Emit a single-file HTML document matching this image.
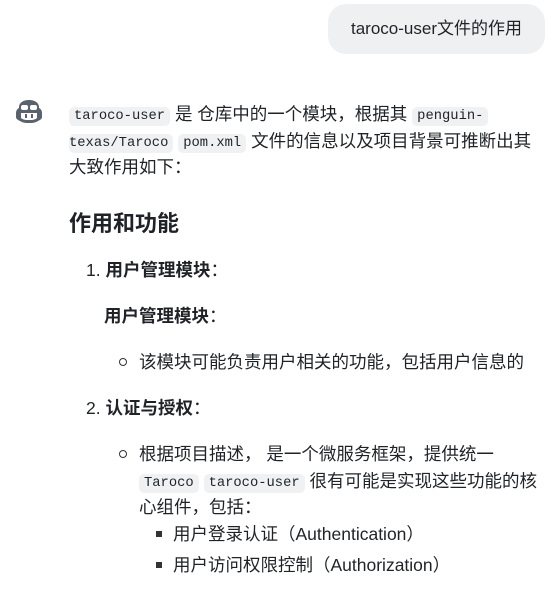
<!DOCTYPE html>
<html><head><meta charset="utf-8"><style>
body{margin:0;width:557px;height:591px;background:#fff;font-family:"Liberation Sans","Noto Sans CJK SC",sans-serif;color:#1f2328;font-size:17.5px;position:relative;overflow:hidden}
.a{position:absolute;white-space:nowrap;line-height:20px}
code{font-family:"Liberation Mono","DejaVu Sans Mono",monospace;font-size:13.8px;background:#eff1f3;border-radius:5px;padding:2px 5px;vertical-align:1px}
b{font-weight:bold}
.bub{position:absolute;left:328px;top:4px;width:217px;height:50px;border-radius:18px;background:#eff0f2;text-align:center;line-height:50px;font-size:17px}
.circ{position:absolute;width:6px;height:6px;border:1.3px solid #333;border-radius:50%}
.sq{position:absolute;width:6px;height:6px;background:#333}
</style></head><body>
<div class="bub">taroco-user文件的作用</div>
<svg style="position:absolute;left:13px;top:97px" width="32" height="28" viewBox="0 0 32 28">
<path d="M16 3c-6 0-10 3-10 7v1c-2 1-3 3-3 5v4c0 2 2 3 4 4 3 2 6 2 9 2s6 0 9-2c2-1 4-2 4-4v-4c0-2-1-4-3-5v-1c0-4-4-7-10-7z" fill="#59636e"/>
<rect x="8" y="8" width="7" height="5" rx="2" fill="#fff"/><rect x="17" y="8" width="7" height="5" rx="2" fill="#fff"/>
<path d="M8 16h16v5c-2 2-5 2-8 2s-6 0-8-2z" fill="#fff"/>
<rect x="12" y="17" width="2" height="4" fill="#59636e"/><rect x="18" y="17" width="2" height="4" fill="#59636e"/>
</svg>
<div class="a" style="left:69px;top:104px"><code>taroco-user</code> 是 仓库中的一个模块，根据其 <code>penguin-</code></div>
<div class="a" style="left:69px;top:131px"><code style="padding-left:0">texas/Taroco</code> <code>pom.xml</code> 文件的信息以及项目背景可推断出其</div>
<div class="a" style="left:69px;top:157px">大致作用如下：</div>
<div class="a" style="left:69px;top:212px;font-size:22px;font-weight:bold;line-height:24px">作用和功能</div>
<div class="a" style="left:86px;top:260px">1. <b>用户管理模块</b>：</div>
<div class="a" style="left:104px;top:306px"><b>用户管理模块</b>：</div>
<div class="circ" style="left:119px;top:358px"></div>
<div class="a" style="left:139px;top:352px">该模块可能负责用户相关的功能，包括用户信息的</div>
<div class="a" style="left:86px;top:398px">2. <b>认证与授权</b>：</div>
<div class="circ" style="left:119px;top:450px"></div>
<div class="a" style="left:139px;top:444px">根据项目描述， 是一个微服务框架，提供统一</div>
<div class="a" style="left:139px;top:471px"><code>Taroco</code> <code>taroco-user</code> 很有可能是实现这些功能的核</div>
<div class="a" style="left:139px;top:497px">心组件，包括：</div>
<div class="sq" style="left:156px;top:531px"></div>
<div class="a" style="left:173px;top:524px">用户登录认证（Authentication）</div>
<div class="sq" style="left:156px;top:562px"></div>
<div class="a" style="left:173px;top:555px">用户访问权限控制（Authorization）</div>
</body></html>
